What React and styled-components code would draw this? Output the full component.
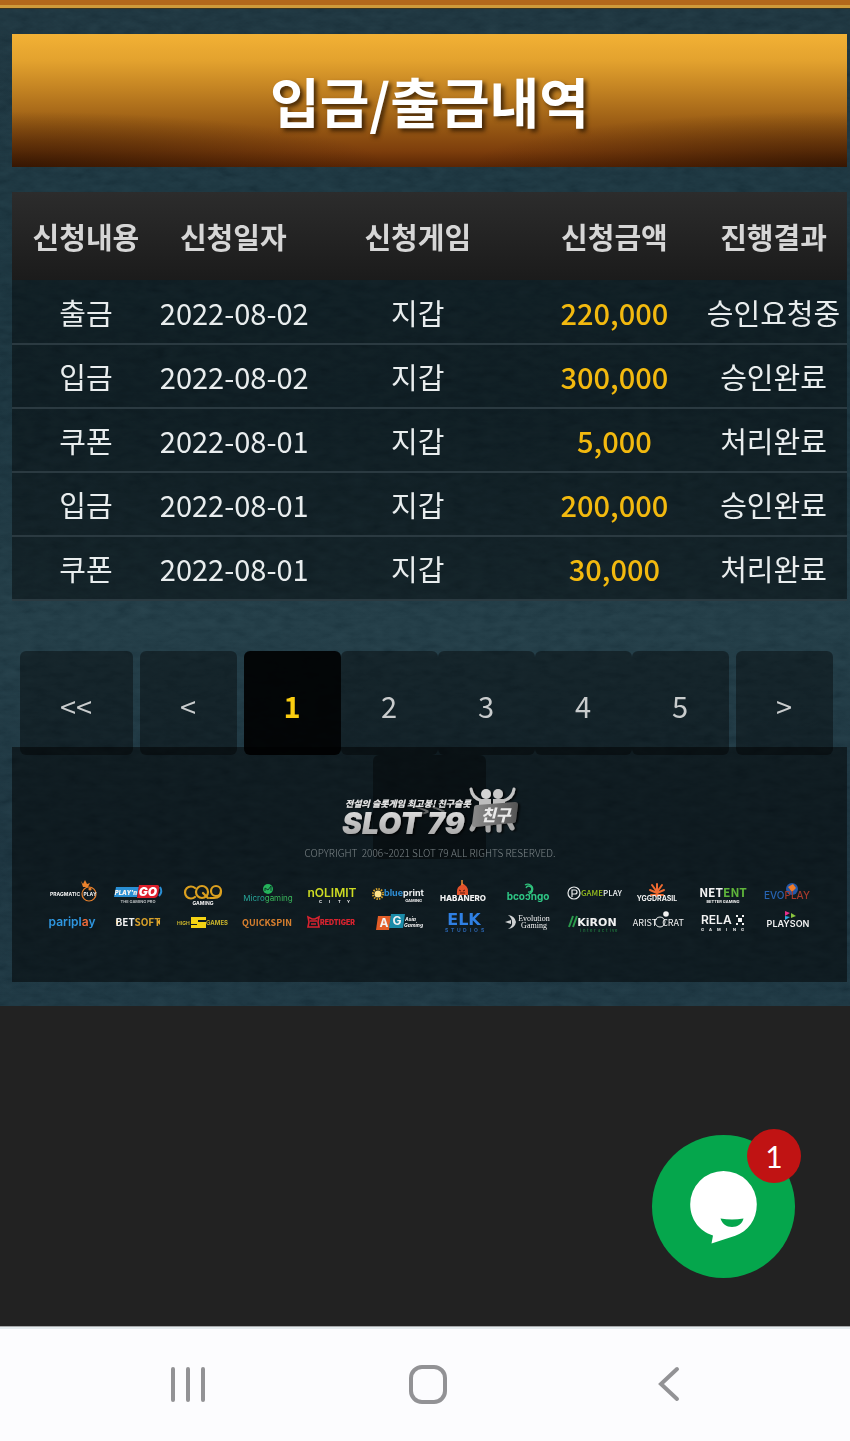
import React from "react";
import styled, { createGlobalStyle, css } from "styled-components";

const GlobalStyle = createGlobalStyle`
  * {
    box-sizing: border-box;
  }
  body {
    margin: 0;
    background: #222222;
    font-family: "Noto Sans CJK KR", "Noto Sans", sans-serif;
  }
  button {
    font-family: inherit;
    cursor: pointer;
  }
`;

const Page = styled.div`
  display: flex;
  flex-direction: column;
  min-height: 100vh;
`;

const Site = styled.div`
  position: relative;
  isolation: isolate;
  background: linear-gradient(#1a303a 0%, #19313b 20%, #172e38 40%, #1e3741 62%, #182e39 85%, #1a323d 100%);
`;

const Texture = styled.svg`
  position: absolute;
  inset: 0;
  width: 100%;
  height: 100%;
  opacity: 0.25;
  mix-blend-mode: soft-light;
`;

const TopBar = styled.div`
  position: relative;
  height: 9px;
  background: #b3681b;
  border-bottom: 1px solid #3b3420;
  box-shadow: inset 0 -3px 0 #cf9a3a;
`;

const Content = styled.main`
  position: relative;
  padding: 25px 3px 24px 12px;
`;

const Title = styled.h1`
  margin: 0 0 25px;
  padding-top: 4px;
  height: 133px;
  line-height: 126px;
  font-size: 54px;
  font-weight: 700;
  text-align: center;
  color: #fff;
  text-shadow: 3px 3px 4px rgba(40, 20, 0, 0.8);
  background: radial-gradient(ellipse 45% 42% at 0 100%, rgba(30, 12, 0, 0.6), transparent),
    radial-gradient(ellipse 45% 42% at 100% 100%, rgba(30, 12, 0, 0.6), transparent),
    linear-gradient(#f2b135 0%, #e3a22e 20%, #c28222 42%, #9c5e15 66%, #7d3e0c 88%, #5a2605 100%);
`;

const History = styled.table`
  width: 100%;
  table-layout: fixed;
  border-collapse: collapse;
  text-align: center;
  font-size: 29px;
  white-space: nowrap;
`;

const Column = styled.col`
  width: ${(props) => props.$width};
`;

const HeadCell = styled.th`
  height: 88px;
  padding: 0;
  line-height: 40px;
  font-weight: 700;
  color: #d6d6d6;
`;

const HeadRow = styled.tr`
  background: linear-gradient(#2c2c2c, #1b1b1b);
`;

const Row = styled.tr`
  background: rgba(0, 0, 0, 0.42);
`;

const Cell = styled.td`
  height: 64px;
  padding: 0;
  line-height: 40px;
  color: #e9edee;
  border-bottom: 2px solid #2b3a41;
  ${(props) =>
    props.$amount &&
    css`
      font-weight: 500;
      color: #f2b90f;
    `}
`;

const Pager = styled.nav`
  display: flex;
  flex-wrap: wrap;
  justify-content: center;
  align-content: flex-start;
  height: 96px;
  margin-top: 50px;
`;

const PageButton = styled.button`
  width: ${(props) => (props.$wide ? "113px" : "97px")};
  height: 104px;
  margin-right: ${(props) => (props.$spaced ? "7px" : "0")};
  padding: 4px 0 0;
  border: none;
  border-radius: 6px;
  background: rgba(0, 0, 0, 0.4);
  color: #c9cccd;
  font-size: 29px;
  ${(props) =>
    props.$active &&
    css`
      background: rgba(0, 0, 0, 0.9);
      color: #fbcd10;
      font-weight: 700;
    `}
`;

const Footer = styled.footer`
  position: relative;
  display: flex;
  flex-direction: column;
  align-items: center;
  height: 235px;
  padding: 38px 27px 0 28px;
  background: rgba(0, 0, 0, 0.5);
  & > svg {
    overflow: visible;
  }
`;

const Copyright = styled.p`
  margin: 8px 0 0;
  font-size: 10px;
  font-weight: 300;
  line-height: 16px;
  color: #7d8689;
  white-space: pre;
`;

const Providers = styled.ul`
  display: grid;
  grid-template-columns: repeat(12, 1fr);
  width: 100%;
  margin: 18px 0 0;
  padding: 0;
  list-style: none;
`;

const Provider = styled.li`
  height: 29px;
  & svg {
    display: block;
    margin: auto;
    overflow: visible;
  }
`;

const Blank = styled.div`
  flex: 1;
`;

const SystemBar = styled.nav`
  display: grid;
  grid-template-columns: repeat(3, 1fr);
  height: 115px;
  padding: 0 61px 0 68px;
  background: #fcfcfe;
  border-top: 1px solid #a5a7a9;
  box-shadow: inset 0 2px 0 #e5ecef;
`;

const SystemButton = styled.button`
  display: flex;
  align-items: center;
  justify-content: center;
  border: none;
  background: none;
`;

const ChatButton = styled.button`
  position: fixed;
  right: 55px;
  bottom: 163px;
  width: 143px;
  height: 143px;
  padding: 0;
  border: none;
  border-radius: 50%;
  background: #05a64c;
  & svg {
    display: block;
  }
`;

const Badge = styled.span`
  position: absolute;
  top: -6px;
  right: -6px;
  width: 54px;
  height: 54px;
  border-radius: 50%;
  background: #c01313;
  color: #fff;
  font: 400 30px/54px Lato, sans-serif;
`;

const records = [
  ["출금", "2022-08-02", "지갑", "220,000", "승인요청중"],
  ["입금", "2022-08-02", "지갑", "300,000", "승인완료"],
  ["쿠폰", "2022-08-01", "지갑", "5,000", "처리완료"],
  ["입금", "2022-08-01", "지갑", "200,000", "승인완료"],
  ["쿠폰", "2022-08-01", "지갑", "30,000", "처리완료"],
];

const headings = ["신청내용", "신청일자", "신청게임", "신청금액", "진행결과"];
const widths = ["17.7%", "17.6%", "26.6%", "20.5%", "17.6%"];

const narrow = "Noto Sans CJK KR, sans-serif";
const wide = "DejaVu Sans, sans-serif";

function T({ x = 32, y, size, fill = "#f2f2f2", weight = 700, font = "Inter", anchor = "middle", ...rest }) {
  return (
    <text x={x} y={y} fontSize={size} fill={fill} fontWeight={weight} fontFamily={font} textAnchor={anchor} {...rest} />
  );
}

const providers = [
  {
    name: "Pragmatic Play",
    art: (
      <>
        <T x={10} y={17} size={5} anchor="start">PRAGMATIC</T>
        <circle cx="49" cy="15" r="7" fill="none" stroke="#e9812c" strokeWidth="1.2" />
        <path d="M41 2l2 3 2-4 2 4 3-1-2 4h-5z" fill="#e9812c" />
        <circle cx="50" cy="10" r="1.6" fill="#e9812c" />
        <T x={50} y={17} size={5}>PLAY</T>
      </>
    ),
  },
  {
    name: "Play'n GO",
    art: (
      <>
        <path d="M11 8h23l-2 10H9z" fill="#2a8fd4" />
        <path d="M34 6h18q3 0 2 4l-1 6q-1 3-4 3H32z" fill="#dd1f2b" />
        <path d="M55 8q3 5-1 9" fill="none" stroke="#2a8fd4" strokeWidth="2" />
        <T x={21} y={16} size={6} weight={900} fontStyle="italic">PLAY'n</T>
        <T x={43} y={17} size={12} weight={900} fill="#fff" fontStyle="italic">GO</T>
        <T x={33} y={24} size={4} fill="#b9bdbf">THE GAMING PRO</T>
      </>
    ),
  },
  {
    name: "CQ9 Gaming",
    art: (
      <>
        <g fill="none" stroke="#dca01f" strokeWidth="2.2" strokeLinecap="round">
          <path d="M25 9a6 6 0 1 0 0 9" />
          <circle cx="32" cy="13" r="6" />
          <path d="M33 14l5 5" />
          <circle cx="46" cy="12" r="5" />
          <path d="M51 12q0 7-7 7h-4" />
        </g>
        <T x={33} y={26} size={5}>GAMING</T>
      </>
    ),
  },
  {
    name: "Microgaming",
    art: (
      <>
        <circle cx="33" cy="10" r="5" fill="#25b35b" />
        <path d="M30 12v-3l3 2 3-4v5" fill="none" stroke="#0c3b2b" />
        <T x={33} y={22} size={8} weight={400} fill="#27a79a">
          Micro<tspan fill="#39b45a">gaming</tspan>
        </T>
      </>
    ),
  },
  {
    name: "Nolimit City",
    art: (
      <>
        <T y={18} size={12} weight={600} fill="#cddb23">nOLIMIT</T>
        <T x="19 29 38 47" y={24} size={4} anchor="start">CITY</T>
      </>
    ),
  },
  {
    name: "Blueprint Gaming",
    art: (
      <>
        <circle cx="13" cy="15" r="3.5" fill="#ffe28a" />
        <circle cx="13" cy="15" r="5" fill="none" stroke="#d9a429" strokeWidth="2" strokeDasharray="1.4 1.2" />
        <T x={19} y={17} size={9} anchor="start" fill="#2f8fd6">
          blue<tspan fill="#eef1f2">print</tspan>
        </T>
        <T x={57} y={23} size={4} anchor="end">GAMING</T>
      </>
    ),
  },
  {
    name: "Habanero",
    art: (
      <>
        <path d="M32 4q6 3 6 8v4H27v-4q0-4 4-6z" fill="#e4522b" />
        <path d="M32 1v5" stroke="#e98b34" strokeWidth="1.5" />
        <path d="M29 11l2 1m4-1l-2 1m-3 2h5" stroke="#54170c" />
        <T x={33} y={22} size={8} weight={800}>HABANERO</T>
      </>
    ),
  },
  {
    name: "Booongo",
    art: (
      <>
        <path d="M30 6a5 5 0 1 1 4 9M31 9a3 3 0 1 1 2 4" fill="none" stroke="#2fc07b" strokeWidth="1.3" />
        <T x={33} y={21} size={10} weight={700} fill="#2fc886">bcoɔngo</T>
      </>
    ),
  },
  {
    name: "GamePlay",
    art: (
      <>
        <circle cx="14" cy="14" r="6" fill="none" stroke="#e8eaeb" strokeWidth="1.2" />
        <path d="M12 18v-7h3a2 2 0 0 1 0 4h-3" fill="none" stroke="#e8eaeb" strokeWidth="1.2" />
        <T x={21} y={17} size={8} anchor="start" weight={500} font={narrow} fill="#9bc31f">
          GAME<tspan fill="#eef1f2">PLAY</tspan>
        </T>
      </>
    ),
  },
  {
    name: "Yggdrasil",
    art: (
      <>
        <path
          d="M32 17V5m0 8l-5-7m5 7l5-7m-5 8l-7-3m7 3l7-3m-7 5l-6 0m6 0l6 0"
          stroke="#ee6a31"
          strokeWidth="2"
          strokeLinecap="round"
        />
        <T y={22} size={7}>YGGDRASIL</T>
      </>
    ),
  },
  {
    name: "NetEnt",
    art: (
      <>
        <T x={33} y={18} size={12} font={narrow}>
          NET<tspan fill="#5fb53b">ENT</tspan>
        </T>
        <T x={33} y={24} size={4}>BETTER GAMING</T>
      </>
    ),
  },
  {
    name: "Evoplay",
    art: (
      <>
        <circle cx="37" cy="10" r="6" fill="#2458a8" />
        <path d="M33 8l5-3 3 4-4 4z" fill="#f07c2a" />
        <T y={20} size={10} weight={500} fill="#2764b4">
          EVO<tspan fill="#a63a2c">PLAY</tspan>
        </T>
      </>
    ),
  },
  {
    name: "Pariplay",
    art: (
      <T y={18} size={12} weight={600} fill="#2f97e0">
        paripl<tspan fill="#ef6a3a">a</tspan>y
      </T>
    ),
  },
  {
    name: "Betsoft",
    art: (
      <>
        <path d="M11 11l3 3-3 3zM55 11l-3 3 3 3z" fill="#e3a62b" />
        <T x={33} y={18} size={10} font={narrow}>
          BET<tspan fill="#d7a02a">SOFT</tspan>
        </T>
      </>
    ),
  },
  {
    name: "High 5 Games",
    art: (
      <>
        <path d="M21 9h15v3h-8v2h8v6H21v-3h6v-1h-6z" fill="#f4d313" />
        <T x={7} y={17} size={5} anchor="start" fill="#c9b32b">HIGH</T>
        <T x={58} y={17} size={6} anchor="end" fill="#c9b32b">GAMES</T>
      </>
    ),
  },
  {
    name: "Quickspin",
    art: (
      <T y={18} size={9} font={narrow} fill="#d9802f">QUICKSPIN</T>
    ),
  },
  {
    name: "Red Tiger",
    art: (
      <>
        <path d="M8 9l4 2h3l4-2-1 5 1 5H8l1-5zm2 4h7m-6 3h5" fill="none" stroke="#d8232f" strokeWidth="1.6" />
        <T x={20} y={17} size={7} anchor="start" weight={900} fill="#d8232f">REDTIGER</T>
      </>
    ),
  },
  {
    name: "Asia Gaming",
    art: (
      <>
        <path d="M13 8h13l-2 14H11z" fill="#e35d27" />
        <path d="M26 6h14l-2 14H24z" fill="#1b8ba8" />
        <T x={19} y={19} size={12}>A</T>
        <T x={32} y={17} size={12}>G</T>
        <T x={40} y={13} size={5} anchor="start" fontStyle="italic">Asia</T>
        <T x={39} y={19} size={5} anchor="start" fontStyle="italic">Gaming</T>
      </>
    ),
  },
  {
    name: "ELK Studios",
    art: (
      <>
        <T x={34} y={17} size={16} font={wide} fill="#2f80e4">ELK</T>
        <T x="15 21 27 33 40 44 51" y={24} size={5} anchor="start" fill="#2a63ad">STUDIOS</T>
      </>
    ),
  },
  {
    name: "Evolution Gaming",
    art: (
      <>
        <path d="M13 7q7 1 8 7-1 6-8 7 5-3 4-7 0-4-4-7z" fill="#cfd2d3" />
        <path d="M10 14l6-2v4z" fill="#cfd2d3" />
        <T x={39} y={13} size={8} weight={400} font="Liberation Serif">Evolution</T>
        <T x={39} y={20} size={8} weight={400} font="Liberation Serif">Gaming</T>
      </>
    ),
  },
  {
    name: "Kiron Interactive",
    art: (
      <>
        <path d="M13 8L9 19m8-11l-4 11" stroke="#2a9a4b" strokeWidth="2" />
        <T x={37} y={18} size={11} font={wide}>KiRON</T>
        <T x="20 23 27 30 34 38 42 46 50 52 55" y={24} size={4} anchor="start" fill="#1e6b3a">interactive</T>
      </>
    ),
  },
  {
    name: "Aristocrat",
    art: (
      <>
        <circle cx="41" cy="6" r="2.8" fill="#f2f2f2" />
        <circle cx="35" cy="14" r="5" fill="none" stroke="#e6e8e9" />
        <T x={20} y={18} size={9} weight={400} font={narrow}>ARIST</T>
        <T x={48} y={18} size={9} weight={400} font={narrow}>CRAT</T>
      </>
    ),
  },
  {
    name: "Relax Gaming",
    art: (
      <>
        <T x={11} y={16} size={12} anchor="start" weight={600}>RELA</T>
        <path d="M46 8h2m4 0h2m-6 3h4m-4 2h4m-6 3h2m4 0h2" stroke="#f2f2f2" strokeWidth="2" />
        <T x="11 19 27 36 43 51" y={23} size={4} anchor="start">GAMING</T>
      </>
    ),
  },
  {
    name: "Playson",
    art: (
      <>
        <path d="M30 3l5 2-5 3z" fill="#e8308c" />
        <path d="M36 5l5 3-5 2z" fill="#8ac43f" />
        <path d="M30 8l5 1-5 3z" fill="#2fa9e0" />
        <T x={33} y={19} size={9} weight={600}>PLAYSON</T>
      </>
    ),
  },
];

function BrandLogo() {
  return (
    <svg width="176" height="52" viewBox="0 0 176 52" role="img" aria-label="SLOT 79">
      <defs>
        <linearGradient id="metal" x1="0" y1="0" x2="0" y2="1">
          <stop offset="0" stopColor="#e8e8e8" />
          <stop offset="1" stopColor="#9d9d9d" />
        </linearGradient>
        <linearGradient id="sign" x1="0" y1="0" x2="1" y2="0">
          <stop offset="0" stopColor="#8b8b8b" />
          <stop offset="1" stopColor="#555555" />
        </linearGradient>
        <filter id="drop" x="-10%" y="-10%" width="130%" height="130%">
          <feDropShadow dx="2" dy="1" stdDeviation="1" floodColor="#000" floodOpacity="0.8" />
        </filter>
      </defs>
      <g filter="url(#drop)">
        <text x="3" y="22" fontSize="9" fontWeight="900" fontStyle="italic" fontFamily="Noto Sans CJK KR" fill="#e2e2e2">
          전설의 슬롯게임 최고봉! 친구슬롯
        </text>
        <text x="0" y="49" fontSize="30" fontWeight="900" fontStyle="italic" fontFamily="Inter" fill="url(#metal)">
          SLOT 79
        </text>
        <g fill="none" stroke="#c4c4c4" strokeWidth="3" strokeLinecap="round">
          <path d="M129 4q1 9 11 12M172 4q-1 9-11 12" />
        </g>
        <path d="M137 14h12v12h-12zM151 14h12v12h-12z" fill="#bdbdbd" />
        <circle cx="144" cy="9" r="5" fill="#d4d4d4" />
        <circle cx="156" cy="9" r="5" fill="#c8c8c8" />
        <path d="M132 40l-2 4m16-4v5m11-6v6m10-8l3 6" stroke="#a8a8a8" strokeWidth="5" strokeLinecap="round" />
        <path d="M135 20l38-3q3 0 3 3l-2 15q0 3-3 3l-38 4q-3 0-3-3l2-16q0-3 3-3z" fill="url(#sign)" />
        <text x="139" y="36" fontSize="16" fontWeight="900" fontStyle="italic" fontFamily="Noto Sans CJK KR" fill="#e9e9e9">
          친구
        </text>
      </g>
    </svg>
  );
}

export default function App() {
  return (
    <Page>
      <GlobalStyle />
      <Site>
        <Texture aria-hidden="true">
          <filter id="grain">
            <feTurbulence type="fractalNoise" baseFrequency="0.06 0.14" numOctaves="4" seed="7" />
            <feColorMatrix values="0.5 0.5 0 0 0  0.5 0.5 0 0 0  0.5 0.5 0 0 0  0 0 0 0 1" />
          </filter>
          <rect width="100%" height="100%" filter="url(#grain)" />
        </Texture>
        <TopBar />
        <Content>
          <Title>입금/출금내역</Title>
          <History>
            <colgroup>
              {widths.map((width, i) => (
                <Column key={i} $width={width} />
              ))}
            </colgroup>
            <thead>
              <HeadRow>
                {headings.map((heading) => (
                  <HeadCell key={heading}>{heading}</HeadCell>
                ))}
              </HeadRow>
            </thead>
            <tbody>
              {records.map((record, i) => (
                <Row key={i}>
                  {record.map((value, j) => (
                    <Cell key={j} $amount={j === 3}>
                      {value}
                    </Cell>
                  ))}
                </Row>
              ))}
            </tbody>
          </History>
          <Pager aria-label="페이지">
            <PageButton $wide $spaced>&lt;&lt;</PageButton>
            <PageButton $spaced>&lt;</PageButton>
            {[1, 2, 3, 4, 5].map((page) => (
              <PageButton key={page} $active={page === 1} $spaced={page === 5}>
                {page}
              </PageButton>
            ))}
            <PageButton $spaced>&gt;</PageButton>
            <PageButton $wide>&gt;&gt;</PageButton>
          </Pager>
          <Footer>
            <BrandLogo />
            <Copyright>{"COPYRIGHT  2006~2021 SLOT 79 ALL RIGHTS RESERVED."}</Copyright>
            <Providers>
              {providers.map((provider) => (
                <Provider key={provider.name}>
                  <svg width="65" height="29" viewBox="0 0 65 29" role="img" aria-label={provider.name}>
                    {provider.art}
                  </svg>
                </Provider>
              ))}
            </Providers>
          </Footer>
        </Content>
      </Site>
      <Blank />
      <SystemBar aria-label="시스템">
        <SystemButton aria-label="최근 앱">
          <svg width="36" height="38" viewBox="0 0 36 38" stroke="#929295" strokeWidth="4" strokeLinecap="round">
            <path d="M3 4v31M18 4v31M33 4v31" />
          </svg>
        </SystemButton>
        <SystemButton aria-label="홈">
          <svg width="38" height="40" viewBox="0 0 38 40" fill="none" stroke="#929295" strokeWidth="4">
            <rect x="2" y="3" width="34" height="35" rx="11" />
          </svg>
        </SystemButton>
        <SystemButton aria-label="뒤로">
          <svg width="22" height="38" viewBox="0 0 22 38" fill="none" stroke="#929295" strokeWidth="4">
            <path d="M19 4L3 19l16 15" strokeLinecap="round" />
          </svg>
        </SystemButton>
      </SystemBar>
      <ChatButton aria-label="채팅">
        <svg width="143" height="143" viewBox="0 0 143 143">
          <path
            d="M71.500 36a33.300 33.300 0 0 1 33.300 33.300c0 16-9 27-21.500 31.500L59.500 108.500l1.500-8C47 96 38.200 84 38.200 69.300A33.300 33.300 0 0 1 71.500 36z"
            fill="#fff"
          />
          <path d="M68.500 83.500q11.500 2 23 0c-1 5-6 8.500-11.500 8.500s-10-3.500-11.500-8.500z" fill="#05a64c" />
        </svg>
        <Badge>1</Badge>
      </ChatButton>
    </Page>
  );
}
